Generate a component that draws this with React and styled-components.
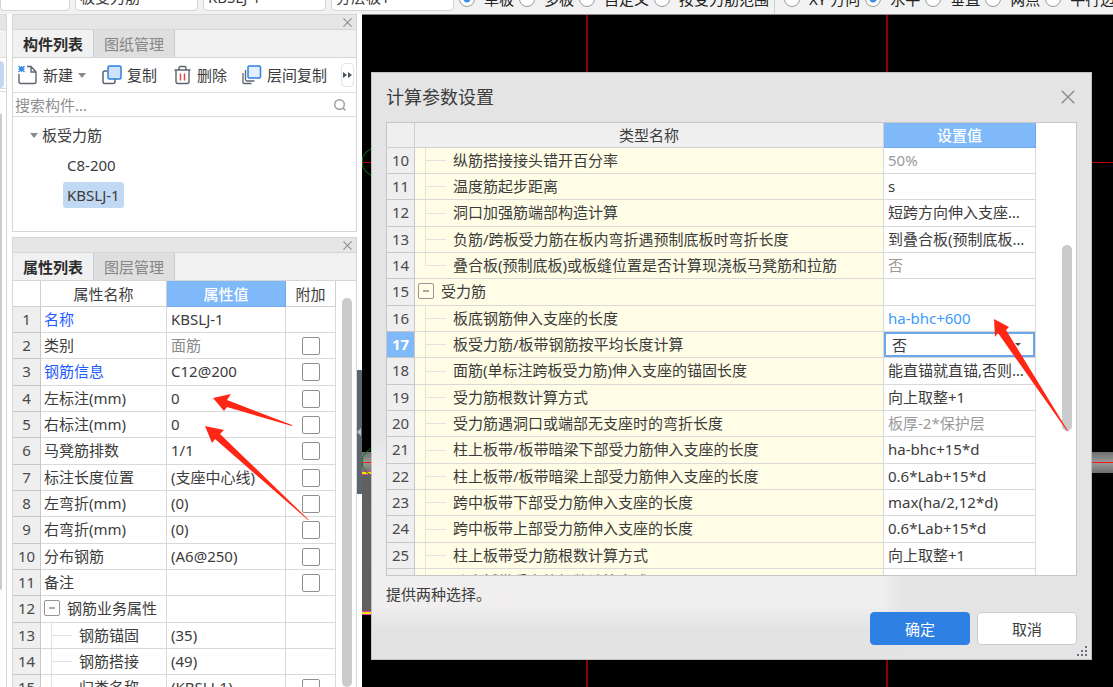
import React, { useState } from "react";
import styled, { createGlobalStyle, css } from "styled-components";

const GlobalStyle = createGlobalStyle`
  * {
    box-sizing: border-box;
  }
  body {
    margin: 0;
    background: #ffffff;
    overflow: hidden;
  }
  body, button, input, select {
    font-family: "Noto Sans", "Noto Sans CJK SC", sans-serif;
    font-size: 15px;
    line-height: 20px;
    color: #3c3c3c;
  }
`;

const Page = styled.div`
  position: relative;
  display: flex;
  flex-direction: column;
  height: 100vh;
  overflow: hidden;
`;

/* ---------- option bar ---------- */

const OptionBar = styled.header`
  display: flex;
  align-items: flex-end;
  flex: none;
  height: 14px;
  overflow: hidden;
  background: #f2f2f2;
`;

const Combos = styled.div`
  display: flex;
  flex: none;
  gap: 5px;
  padding-bottom: 3px;
`;

const Combo = styled.select`
  appearance: none;
  width: ${(props) => (props.$short ? "70px" : "123px")};
  height: 28px;
  padding: 0 4px;
  background: #ffffff;
  border: 1px solid #d4d4d4;
  border-radius: 4px;
`;

const RadioGroup = styled.div`
  display: flex;
  flex: none;
  gap: 5px;
  padding: 0 5px;
  padding-bottom: 6px;

  & + & {
    padding-left: 9px;
    border-left: 1px solid #d0d0d0;
  }
`;

const RadioLabel = styled.label`
  display: flex;
  align-items: center;
  gap: 9px;
  height: 18px;
  white-space: nowrap;
  color: #222222;
`;

const Radio = styled.input`
  appearance: none;
  width: 16px;
  height: 16px;
  margin: 0;
  background: #ffffff;
  border: 1px solid #9a9a9a;
  border-radius: 50%;

  &:checked {
    background: radial-gradient(circle, #3d8ce8 0 3px, #ffffff 4px);
  }
`;

/* ---------- docks ---------- */

const Workspace = styled.main`
  display: flex;
  flex: 1;
  min-height: 0;
`;

const EdgeDock = styled.aside`
  display: flex;
  flex-direction: column;
  flex: none;
  width: 7px;
  border-right: 1px solid #d6d6d6;
`;

const EdgeBlock = styled.div`
  height: ${(props) => props.$height}px;
  margin-right: ${(props) => props.$inset || 0}px;
  background: ${(props) => props.$color};
  border-top: 1px solid #dcdcdc;
  border-radius: ${(props) => (props.$inset ? "0 4px 4px 0" : "0")};
`;

const Dock = styled.aside`
  display: flex;
  flex-direction: column;
  flex: none;
  gap: 5px;
  width: 345px;
  margin-left: 5px;
`;

const Panel = styled.section`
  display: flex;
  flex-direction: column;
  flex: ${(props) => (props.$grow ? "1" : "0 0 218px")};
  min-height: 0;
  overflow: hidden;
  background: #ffffff;
  border: 1px solid #d6d6d6;
  border-bottom-width: ${(props) => (props.$grow ? "0" : "1px")};
`;

const PanelBar = styled.div`
  display: flex;
  justify-content: flex-end;
  align-items: center;
  flex: none;
  height: 14px;
  padding-right: 4px;
  background: #e6e6e6;
`;

const IconButton = styled.button`
  display: flex;
  padding: 0;
  background: none;
  border: 0;
  color: #8c8c8c;
`;

const TabList = styled.div`
  display: flex;
  flex: none;
  height: 29px;
  background: #f1f1f1;
  border-top: 1px solid #d6d6d6;
  border-bottom: 1px solid #d6d6d6;
`;

const Tab = styled.button`
  width: 81px;
  padding: 0;
  background: ${(props) => (props.$active ? "#f1f1f1" : "#dfdfdf")};
  border: 0;
  border-right: 1px solid #c5ccd2;
  color: ${(props) => (props.$active ? "#2c2c2c" : "#858585")};
  font-weight: ${(props) => (props.$active ? "700" : "400")};
`;

const Tools = styled.div`
  display: flex;
  align-items: center;
  flex: none;
  height: 35px;
  padding: 0 2px 0 5px;
  border-bottom: 1px solid #e0e0e0;
`;

const Tool = styled.button`
  display: flex;
  align-items: center;
  gap: 5px;
  padding: 0;
  margin-right: ${(props) => props.$gap || 0}px;
  background: none;
  border: 0;
  white-space: nowrap;
`;

const MoreTools = styled.button`
  display: flex;
  align-items: center;
  justify-content: center;
  width: 13px;
  height: 24px;
  margin-left: auto;
  padding: 0;
  background: #ffffff;
  border: 1px solid #e4e4e4;
  border-radius: 4px;
`;

const SearchRow = styled.label`
  display: flex;
  align-items: center;
  flex: none;
  height: 24px;
  padding: 0 9px 0 2px;
  border-bottom: 1px solid #dcdcdc;
`;

const SearchInput = styled.input`
  flex: 1;
  min-width: 0;
  padding: 0;
  border: 0;
  outline: 0;

  &::placeholder {
    color: #8f8f8f;
  }
`;

const Tree = styled.ul`
  margin: 0;
  padding: 3px 0 0 17px;
  list-style: none;
`;

const TreeGroup = styled.li`
  display: flex;
  align-items: center;
  gap: 4px;
  height: 30px;
`;

const TreeItem = styled.li`
  display: flex;
  align-items: center;
  height: 30px;
  padding-left: 33px;
`;

const TreeLabel = styled.button`
  height: 26px;
  padding: 0 4px;
  background: ${(props) => (props.$selected ? "#c1d9f2" : "transparent")};
  border: 0;
  border-radius: 3px;
`;

const Splitter = styled.div`
  flex: none;
  width: 5px;
  padding-top: 356px;
`;

const SplitterHandle = styled.button`
  display: flex;
  align-items: center;
  width: 5px;
  height: 124px;
  padding: 0;
  background: #5b6671;
  border: 0;
`;

/* ---------- tables ---------- */

const TableArea = styled.div`
  display: flex;
  flex: 1;
  min-height: 0;
  overflow: hidden;
`;

const Table = styled.table`
  flex: 1;
  align-self: flex-start;
  width: 100%;
  min-width: 0;
  table-layout: fixed;
  border-collapse: separate;
  border-spacing: 0;
`;

const Row = styled.tr`
  height: 26px;

  &:nth-child(3n) {
    height: 27px;
  }
`;

const cell = css`
  padding: 0;
  border-right: 1px solid #d9d9d9;
  border-bottom: 1px solid #d9d9d9;
  overflow: hidden;
  white-space: nowrap;
  text-overflow: ellipsis;
  font-weight: 400;
`;

const HeadCell = styled.th`
  ${cell}
  width: ${(props) => props.$width};
  height: ${(props) => props.$height}px;
  background: ${(props) => (props.$active ? "#80b9f9" : props.$bg)};
  color: ${(props) => (props.$active ? "#ffffff" : "#3c3c3c")};
  font-weight: ${(props) => (props.$active ? "500" : "400")};
  border-color: ${(props) => (props.$active ? "#6faaf0" : "#cfcfcf")};
`;

const NumberCell = styled.th`
  ${cell}
  padding-bottom: 2px;
  background: ${(props) => (props.$active ? "#80b9f9" : "#efefef")};
  border-color: #c8c8c8;
  color: ${(props) => (props.$active ? "#ffffff" : "#4a4a4a")};
  font-weight: ${(props) => (props.$active ? "700" : "400")};
`;

const branchLines = {
  child: "1px 100%",
  last: "1px 50%",
};

const NameCell = styled.td`
  ${cell}
  padding-bottom: 2px;
  padding-left: ${(props) => (branchLines[props.$branch] ? "38px" : "3px")};
  background-color: ${(props) => (props.$tinted ? "#fffde5" : "#ffffff")};
  color: ${(props) => (props.$link ? "#1f5cff" : "#3c3c3c")};
  ${(props) =>
    branchLines[props.$branch] &&
    css`
      background-image: linear-gradient(#e2e2e2, #e2e2e2),
        linear-gradient(#e2e2e2, #e2e2e2);
      background-size: ${branchLines[props.$branch]}, 20px 1px;
      background-position: 10px 0, 11px 50%;
      background-repeat: no-repeat;
    `}
`;

const ValueCell = styled.td`
  ${cell}
  padding: ${(props) => (props.$editing ? "0" : "0 4px 2px")};
  background: #ffffff;
  color: ${(props) => props.$color || "#3c3c3c"};
`;

const CheckCell = styled.td`
  ${cell}
  text-align: center;
`;

const CheckBox = styled.input`
  appearance: none;
  display: block;
  width: 18px;
  height: 18px;
  margin: 0 auto;
  background: #ffffff;
  border: 1px solid #8f8f8f;
  border-radius: 2px;

  &:checked {
    background: #2e80e2;
  }
`;

const GroupName = styled.div`
  display: flex;
  align-items: center;
  gap: 7px;
`;

const Toggle = styled.button`
  display: flex;
  align-items: center;
  justify-content: center;
  width: 16px;
  height: 16px;
  padding: 0;
  background: transparent;
  border: 1px solid #949494;
  border-radius: 2px;
`;

const ScrollTrack = styled.div`
  flex: none;
  width: ${(props) => props.$width}px;
  padding: ${(props) => props.$padding};
`;

const ScrollThumb = styled.div`
  width: 10px;
  height: ${(props) => props.$height};
  background: #cbcbcb;
  border-radius: 5px;
`;

const SelectBox = styled.div`
  position: relative;
  height: 25px;

  &::after {
    content: "";
    position: absolute;
    top: 11px;
    right: 14px;
    border: 3px solid transparent;
    border-top-color: #4a4a4a;
    border-bottom: 0;
  }
`;

const CellSelect = styled.select`
  appearance: none;
  display: block;
  width: 100%;
  height: 100%;
  padding: 0 6px;
  background: #ffffff;
  border: 2px solid #6aa7e8;
  border-radius: 0;
`;

/* ---------- drawing canvas and dialog ---------- */

const Canvas = styled.section`
  position: relative;
  flex: 1;
  min-width: 0;
  background: #000000;
  border-top: 1px solid #8a8a8a;
`;

const Drawing = styled.svg`
  position: absolute;
  inset: 0;
  width: 100%;
  height: 100%;
`;

const Dialog = styled.div`
  position: absolute;
  top: 57px;
  right: 21px;
  bottom: 27px;
  left: 9px;
  display: flex;
  flex-direction: column;
  padding: 0 14px 14px;
  background: linear-gradient(to right, transparent 71%, #e4e4e4 74%),
    linear-gradient(#e4e4e4 62%, #efefef 68%, #f0eeee 91%, #e3e3e3 95%);
  border: 1px solid #c2c2c2;
`;

const DialogHead = styled.div`
  display: flex;
  align-items: center;
  justify-content: space-between;
  flex: none;
  height: 49px;
  padding: 0 2px 2px 0;
`;

const DialogTitle = styled.h1`
  margin: 0;
  font-size: 18px;
  font-weight: 400;
`;

const DialogGrid = styled.div`
  display: flex;
  flex: 1;
  min-height: 0;
  overflow: hidden;
  background: #ffffff;
  border: 1px solid #c6c6c6;
`;

const Hint = styled.p`
  flex: none;
  margin: 0;
  padding: 8px 0;
`;

const DialogActions = styled.div`
  display: flex;
  justify-content: flex-end;
  flex: none;
  gap: 7px;
`;

const Button = styled.button`
  width: 100px;
  height: 33px;
  padding: 0;
  background: ${(props) => (props.$primary ? "#2e80e2" : "#ffffff")};
  border: 1px solid ${(props) => (props.$primary ? "#2e80e2" : "#cccccc")};
  border-radius: 4px;
  color: ${(props) => (props.$primary ? "#ffffff" : "#3c3c3c")};
`;

const Grip = styled.svg`
  position: absolute;
  right: 4px;
  bottom: 3px;
`;

const Annotations = styled.svg`
  position: absolute;
  inset: 0;
  width: 100%;
  height: 100%;
  pointer-events: none;
`;

const rangeModes = ["单板", "多板", "自定义", "按受力筋范围"];
const layoutModes = ["XY 方向", "水平", "垂直", "两点", "平行边"];

const properties = [
  { name: "名称", value: "KBSLJ-1", link: true },
  { name: "类别", value: "面筋", color: "#8a8a8a", check: true },
  { name: "钢筋信息", value: "C12@200", link: true, check: true },
  { name: "左标注(mm)", value: "0", check: true },
  { name: "右标注(mm)", value: "0", check: true },
  { name: "马凳筋排数", value: "1/1", check: true },
  { name: "标注长度位置", value: "(支座中心线)", check: true },
  { name: "左弯折(mm)", value: "(0)", check: true },
  { name: "右弯折(mm)", value: "(0)", check: true },
  { name: "分布钢筋", value: "(A6@250)", check: true },
  { name: "备注", value: "", check: true },
  { name: "钢筋业务属性", value: "", branch: "group" },
  { name: "钢筋锚固", value: "(35)", branch: "child" },
  { name: "钢筋搭接", value: "(49)", branch: "child" },
  { name: "归类名称", value: "(KBSLJ-1)", branch: "child", check: true },
];

const settings = [
  { name: "纵筋搭接接头错开百分率", value: "50%", color: "#9a9a9a" },
  { name: "温度筋起步距离", value: "s" },
  { name: "洞口加强筋端部构造计算", value: "短跨方向伸入支座的长度" },
  {
    name: "负筋/跨板受力筋在板内弯折遇预制底板时弯折长度",
    value: "到叠合板(预制底板顶部)",
  },
  {
    name: "叠合板(预制底板)或板缝位置是否计算现浇板马凳筋和拉筋",
    value: "否",
    color: "#9a9a9a",
    branch: "last",
  },
  { name: "受力筋", value: "", branch: "group" },
  { name: "板底钢筋伸入支座的长度", value: "ha-bhc+600", color: "#3a9bff" },
  { name: "板受力筋/板带钢筋按平均长度计算", value: "否", editing: true },
  {
    name: "面筋(单标注跨板受力筋)伸入支座的锚固长度",
    value: "能直锚就直锚,否则按公式计算",
  },
  { name: "受力筋根数计算方式", value: "向上取整+1" },
  {
    name: "受力筋遇洞口或端部无支座时的弯折长度",
    value: "板厚-2*保护层",
    color: "#9a9a9a",
  },
  { name: "柱上板带/板带暗梁下部受力筋伸入支座的长度", value: "ha-bhc+15*d" },
  { name: "柱上板带/板带暗梁上部受力筋伸入支座的长度", value: "0.6*Lab+15*d" },
  { name: "跨中板带下部受力筋伸入支座的长度", value: "max(ha/2,12*d)" },
  { name: "跨中板带上部受力筋伸入支座的长度", value: "0.6*Lab+15*d" },
  { name: "柱上板带受力筋根数计算方式", value: "向上取整+1" },
  { name: "跨中板带受力筋根数计算方式", value: "" },
];

const CloseIcon = ({ size }) => (
  <svg width={size} height={size} viewBox="0 0 10 10" fill="none">
    <path
      d="M0.5 0.5 9.5 9.5M9.5 0.5 0.5 9.5"
      stroke="currentColor"
      strokeWidth={size > 10 ? 1 : 1.2}
    />
  </svg>
);

const CaretDown = () => (
  <svg width="8" height="5" viewBox="0 0 8 5">
    <path d="M0 0h8L4 5z" fill="#8a8a8a" />
  </svg>
);

const NewIcon = () => (
  <svg width="20" height="20" viewBox="0 0 20 20" fill="none">
    <path
      d="M1 9v7.500a2 2 0 0 0 2 2h13a2 2 0 0 0 2-2V7l-5-5.500H9M13 1.500V7h5"
      stroke="#5d6470"
      strokeWidth="1.400"
    />
    <path
      d="M0.500 1l6 6M6.500 1l-6 6M3.500 1v6M0.500 4h6"
      stroke="#3a8ae8"
      strokeWidth="1.300"
    />
  </svg>
);

const CopyIcon = () => (
  <svg width="20" height="20" viewBox="0 0 20 20" fill="none">
    <path
      d="M5.500 6H3a2 2 0 0 0-2 2v8.500a2 2 0 0 0 2 2h8a2 2 0 0 0 2-2V14"
      stroke="#5d6470"
      strokeWidth="1.500"
    />
    <rect
      x="6"
      y="1"
      width="13"
      height="13"
      rx="1.500"
      fill="#cfe2fb"
      stroke="#2e80e2"
      strokeWidth="1.500"
    />
  </svg>
);

const DeleteIcon = () => (
  <svg width="18" height="20" viewBox="0 0 18 20" fill="none">
    <path
      d="M0.500 5h16M5 5V3a1.500 1.500 0 0 1 1.500-1.500h4A1.500 1.500 0 0 1 12 3v2M2 5v11.500a2 2 0 0 0 2 2h9a2 2 0 0 0 2-2V5"
      stroke="#5d6470"
      strokeWidth="1.400"
    />
    <path d="M6.500 8.500v7M10.500 8.500v7" stroke="#e0474c" strokeWidth="1.500" />
  </svg>
);

const FloorCopyIcon = () => (
  <svg width="20" height="20" viewBox="0 0 20 20" fill="none">
    <path
      d="M1 8v9.500a1 1 0 0 0 1 1h7.500M3.500 5v9.500a1.500 1.500 0 0 0 1.500 1.500h7.500"
      stroke="#5d6470"
      strokeWidth="1.300"
    />
    <rect
      x="6"
      y="1"
      width="12.500"
      height="12"
      rx="1"
      fill="#e3effd"
      stroke="#2e80e2"
      strokeWidth="1.500"
    />
  </svg>
);

const SearchIcon = () => (
  <svg width="14" height="14" viewBox="0 0 14 14" fill="none">
    <circle cx="6.500" cy="6.500" r="4.800" stroke="#a0a0a0" strokeWidth="1.500" />
    <path d="M10 10l2.500 2.500" stroke="#a0a0a0" strokeWidth="1.500" />
  </svg>
);

const Name = ({ row }) =>
  row.branch === "group" ? (
    <GroupName>
      <Toggle aria-label={`折叠${row.name}`}>
        <svg width="6" height="2">
          <path d="M0 1h6" stroke="#555555" />
        </svg>
      </Toggle>
      {row.name}
    </GroupName>
  ) : (
    row.name
  );

const ComponentPanel = () => {
  const [selected, setSelected] = useState("KBSLJ-1");

  return (
    <Panel>
      <PanelBar>
        <IconButton aria-label="关闭构件列表">
          <CloseIcon size={9} />
        </IconButton>
      </PanelBar>
      <TabList role="tablist">
        <Tab role="tab" aria-selected="true" $active>
          构件列表
        </Tab>
        <Tab role="tab" aria-selected="false">
          图纸管理
        </Tab>
      </TabList>
      <Tools>
        <Tool $gap={16}>
          <NewIcon />
          新建
          <CaretDown />
        </Tool>
        <Tool $gap={17}>
          <CopyIcon />
          复制
        </Tool>
        <Tool $gap={15}>
          <DeleteIcon />
          删除
        </Tool>
        <Tool>
          <FloorCopyIcon />
          层间复制
        </Tool>
        <MoreTools aria-label="更多">
          <svg width="9" height="6" viewBox="0 0 9 6">
            <path d="M0 0l4 3-4 3zM5 0l4 3-4 3z" fill="#4c5560" />
          </svg>
        </MoreTools>
      </Tools>
      <SearchRow>
        <SearchInput placeholder="搜索构件..." aria-label="搜索构件" />
        <SearchIcon />
      </SearchRow>
      <Tree>
        <TreeGroup>
          <CaretDown />
          板受力筋
        </TreeGroup>
        {["C8-200", "KBSLJ-1"].map((item) => (
          <TreeItem key={item}>
            <TreeLabel
              $selected={item === selected}
              onClick={() => setSelected(item)}
            >
              {item}
            </TreeLabel>
          </TreeItem>
        ))}
      </Tree>
    </Panel>
  );
};

const PropertyPanel = () => (
  <Panel $grow>
    <PanelBar>
      <IconButton aria-label="关闭属性列表">
        <CloseIcon size={9} />
      </IconButton>
    </PanelBar>
    <TabList role="tablist">
      <Tab role="tab" aria-selected="true" $active>
        属性列表
      </Tab>
      <Tab role="tab" aria-selected="false">
        图层管理
      </Tab>
    </TabList>
    <TableArea>
      <Table>
        <thead>
          <tr>
            <HeadCell $width="28px" $height={26} $bg="#ffffff" />
            <HeadCell $width="126px" $height={26} $bg="#ffffff">
              属性名称
            </HeadCell>
            <HeadCell $width="119px" $height={26} $active>
              属性值
            </HeadCell>
            <HeadCell $height={26} $bg="#ffffff">
              附加
            </HeadCell>
          </tr>
        </thead>
        <tbody>
          {properties.map((row, index) => (
            <Row key={row.name}>
              <NumberCell scope="row">{index + 1}</NumberCell>
              <NameCell $branch={row.branch} $link={row.link}>
                <Name row={row} />
              </NameCell>
              <ValueCell $color={row.color}>{row.value}</ValueCell>
              <CheckCell>
                {row.check ? (
                  <CheckBox type="checkbox" aria-label={`附加${row.name}`} />
                ) : null}
              </CheckCell>
            </Row>
          ))}
        </tbody>
      </Table>
      <ScrollTrack $width={20} $padding="17px 0 0 6px">
        <ScrollThumb $height="100%" />
      </ScrollTrack>
    </TableArea>
  </Panel>
);

const SettingsDialog = () => (
  <Dialog role="dialog" aria-labelledby="dialog-title">
    <DialogHead>
      <DialogTitle id="dialog-title">计算参数设置</DialogTitle>
      <IconButton aria-label="关闭">
        <CloseIcon size={14} />
      </IconButton>
    </DialogHead>
    <DialogGrid>
      <Table>
        <thead>
          <tr>
            <HeadCell $width="28px" $height={25} $bg="#efefef" />
            <HeadCell $height={25} $bg="#efefef">
              类型名称
            </HeadCell>
            <HeadCell $width="152px" $height={25} $active>
              设置值
            </HeadCell>
          </tr>
        </thead>
        <tbody>
          {settings.map((row, index) => (
            <Row key={row.name}>
              <NumberCell scope="row" $active={row.editing}>
                {index + 10}
              </NumberCell>
              <NameCell $tinted $branch={row.branch || "child"}>
                <Name row={row} />
              </NameCell>
              <ValueCell $color={row.color} $editing={row.editing}>
                {row.editing ? (
                  <SelectBox>
                    <CellSelect aria-label={row.name} defaultValue={row.value}>
                      <option>否</option>
                      <option>是</option>
                    </CellSelect>
                  </SelectBox>
                ) : (
                  row.value
                )}
              </ValueCell>
            </Row>
          ))}
        </tbody>
      </Table>
      <ScrollTrack $width={40} $padding="122px 0 0 26px">
        <ScrollThumb $height="186px" />
      </ScrollTrack>
    </DialogGrid>
    <Hint>提供两种选择。</Hint>
    <DialogActions>
      <Button $primary>确定</Button>
      <Button>取消</Button>
    </DialogActions>
    <Grip width="10" height="10" viewBox="0 0 10 10">
      <path
        d="M8 0h2v2h-2zM4 4h2v2h-2zM8 4h2v2h-2zM0 8h2v2h-2zM4 8h2v2h-2zM8 8h2v2h-2z"
        fill="#6a727c"
      />
    </Grip>
  </Dialog>
);

const App = () => (
  <Page>
    <GlobalStyle />
    <OptionBar>
      <Combos>
        <Combo $short aria-label="楼层" />
        <Combo aria-label="构件类型">
          <option>板受力筋</option>
        </Combo>
        <Combo aria-label="构件">
          <option>KBSLJ-1</option>
        </Combo>
        <Combo aria-label="分层">
          <option>分层板1</option>
        </Combo>
      </Combos>
      <RadioGroup>
        {rangeModes.map((mode, index) => (
          <RadioLabel key={mode}>
            <Radio type="radio" name="range" defaultChecked={index === 0} />
            {mode}
          </RadioLabel>
        ))}
      </RadioGroup>
      <RadioGroup>
        {layoutModes.map((mode, index) => (
          <RadioLabel key={mode}>
            <Radio type="radio" name="layout" defaultChecked={index === 1} />
            {mode}
          </RadioLabel>
        ))}
      </RadioGroup>
    </OptionBar>
    <Workspace>
      <EdgeDock>
        <EdgeBlock $height={15} $color="#e6e6e6" />
        <EdgeBlock $height={28} $color="#f1f1f1" />
        <EdgeBlock $height={4} $color="#ffffff" />
        <EdgeBlock $height={27} $color="#c1d9f2" $inset={2} />
        <EdgeBlock $height={3} $color="#ffffff" />
        <EdgeBlock $height={22} $color="#ffffff" />
        <EdgeBlock $height={477} $color="#cbcbcb" $inset={4} />
      </EdgeDock>
      <Dock>
        <ComponentPanel />
        <PropertyPanel />
      </Dock>
      <Splitter>
        <SplitterHandle aria-label="收起面板">
          <svg width="4" height="8">
            <path d="M4 0v8L0 4z" fill="#b8bec4" />
          </svg>
        </SplitterHandle>
      </Splitter>
      <Canvas>
        <Drawing>
          <defs>
            <linearGradient id="beam" x1="0" y1="0" x2="0" y2="1">
              <stop offset="0" stopColor="#6e6e6e" />
              <stop offset="0.500" stopColor="#9a9a9a" />
              <stop offset="1" stopColor="#6e6e6e" />
            </linearGradient>
          </defs>
          <rect x="0" y="457" width="525" height="140" fill="#606060" />
          <rect x="0" y="437" width="100%" height="21" fill="url(#beam)" />
          <g fill="none" stroke="#8b0000" strokeWidth="2">
            <path d="M225 0v700M525 0v700" />
          </g>
          <path d="M0 147.500h800" stroke="#c00000" />
          <path d="M0 447.500h800" stroke="#ff1414" />
          <path d="M0 458h12M0 598h12" stroke="#d93fa8" strokeWidth="4" />
          <path d="M0 458h12M0 598h12" stroke="#ffe000" strokeWidth="2" />
          <g fill="none" stroke="#0a7a0a">
            <circle cx="14" cy="147" r="14" />
            <circle cx="14" cy="447" r="14" />
          </g>
        </Drawing>
        <SettingsDialog />
      </Canvas>
    </Workspace>
    <Annotations>
      <g fill="#ff2615">
        <path d="M213 398l18-4-4 6 65 25v1l-65-19-3 4z" />
        <path d="M205 426l19 4-4 4 89 86h-1l-93-81-3 4z" />
        <path d="M994 319l15 8-3 3 62 101h-1l-69-98-3 4z" />
      </g>
    </Annotations>
  </Page>
);

export default App;
